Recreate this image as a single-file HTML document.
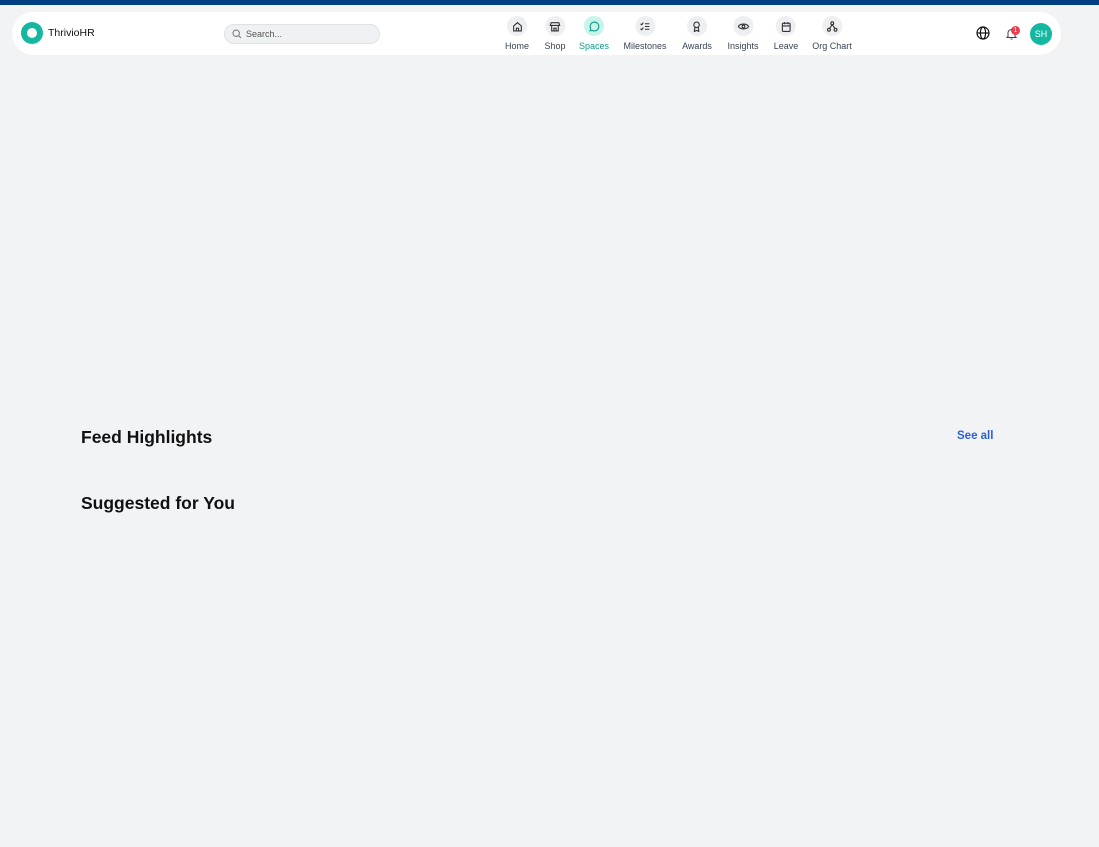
<!DOCTYPE html>
<html><head><meta charset="utf-8"><style>
*{margin:0;padding:0;box-sizing:border-box}
body{width:1099px;height:847px;background:#f2f3f5;font-family:"Liberation Sans",sans-serif;position:relative;overflow:hidden}
.top{position:absolute;left:0;top:0;width:1099px;height:5px;background:#003f7f}
.hdr{position:absolute;left:12px;top:12px;width:1049px;height:43px;background:#fff;border-radius:22px}
.logo{position:absolute;left:21px;top:22px;width:22px;height:22px;border-radius:50%;background:#14b8a0}
.logo:after{content:"";position:absolute;left:6px;top:6px;width:10px;height:10px;border-radius:50%;background:#fff}
.brand{position:absolute;left:48px;top:27px;font-size:10.5px;color:#111}
.search{position:absolute;left:224px;top:24px;width:156px;height:20px;border-radius:10px;background:#f0f1f3;border:1px solid #dfe1e5}
.search span{position:absolute;left:21px;top:4px;font-size:9px;color:#555}
.nav{position:absolute;top:16px;text-align:center;transform:translateX(-50%)}
.nav .c{width:20px;height:20px;border-radius:50%;background:#eeeff2;margin:0 auto;display:flex;align-items:center;justify-content:center}
.nav .l{font-size:9px;color:#3b4252;margin-top:5px;white-space:nowrap}
.nav.a .c{background:#c8f5ea}.nav.a .l{color:#0f9e8a}
h2{position:absolute;left:81px;font-size:17.5px;font-weight:bold;color:#111}
.see{position:absolute;left:957px;top:430px;font-size:11.5px;font-weight:bold;color:#2b5fd9}
.av{position:absolute;left:1030px;top:23px;width:22px;height:22px;border-radius:50%;background:#14b8a0;color:#fff;font-size:9px;text-align:center;line-height:22px}
</style></head><body>
<div class="top"></div>
<div class="hdr"></div>
<div class="logo"></div><div class="brand">ThrivioHR</div>
<div class="search"><svg style="position:absolute;left:7px;top:4px" width="10" height="10" viewBox="0 0 10 10" fill="none" stroke="#777" stroke-width="1"><circle cx="4.2" cy="4.2" r="3.2"/><path d="M6.6 6.6L9 9"/></svg><span>Search...</span></div>

<div class="nav" style="left:517px"><div class="c"><svg width="11" height="11" viewBox="0 0 10 10" fill="none" stroke="#333" stroke-width="1"><path d="M1.5 4.5L5 1.5 8.5 4.5V9h-7z M4 9V6.5h2V9"/></svg></div><div class="l">Home</div></div>
<div class="nav" style="left:555px"><div class="c"><svg width="11" height="11" viewBox="0 0 10 10" fill="none" stroke="#333" stroke-width="1"><path d="M1.5 1.5h7l.8 2.5h-8.6z M2 4v5h6V4 M4 9V6.5h2V9"/></svg></div><div class="l">Shop</div></div>
<div class="nav a" style="left:594px"><div class="c"><svg width="11" height="11" viewBox="0 0 10 10" fill="none" stroke="#0f9e8a" stroke-width="1"><path d="M5 1a4 4 0 1 1-2 7.5L1 9l.6-2A4 4 0 0 1 5 1z"/></svg></div><div class="l">Spaces</div></div>
<div class="nav" style="left:645px"><div class="c"><svg width="11" height="11" viewBox="0 0 10 10" fill="none" stroke="#333" stroke-width="1"><path d="M1 2.5l1 1 1.5-2M1 7l1 1 1.5-2M5 2.5h4M5 5h4M5 7.5h4"/></svg></div><div class="l">Milestones</div></div>
<div class="nav" style="left:697px"><div class="c"><svg width="11" height="11" viewBox="0 0 10 10" fill="none" stroke="#333" stroke-width="1"><circle cx="5" cy="3.5" r="2.5"/><path d="M3.5 5.5L3 9.5 5 8.5 7 9.5 6.5 5.5"/></svg></div><div class="l">Awards</div></div>
<div class="nav" style="left:743px"><div class="c"><svg width="12" height="11" viewBox="0 0 11 10" fill="none" stroke="#333" stroke-width="1"><path d="M.8 5C2.5 2 8.5 2 10.2 5 8.5 8 2.5 8 .8 5z"/><circle cx="5.5" cy="5" r="1.3"/></svg></div><div class="l">Insights</div></div>
<div class="nav" style="left:786px"><div class="c"><svg width="11" height="11" viewBox="0 0 10 10" fill="none" stroke="#333" stroke-width="1"><rect x="1.5" y="2" width="7" height="7.5" rx="1"/><path d="M3.5 1v2M6.5 1v2M1.5 4.5h7"/></svg></div><div class="l">Leave</div></div>
<div class="nav" style="left:832px"><div class="c"><svg width="12" height="11" viewBox="0 0 11 10" fill="none" stroke="#333" stroke-width="1"><circle cx="5.5" cy="2" r="1.3"/><circle cx="2.5" cy="8" r="1.3"/><circle cx="8.5" cy="8" r="1.3"/><path d="M5.5 3.3L3 6.8M5.5 3.3L8 6.8"/></svg></div><div class="l">Org Chart</div></div>

<svg style="position:absolute;left:976px;top:26px" width="14" height="14" viewBox="0 0 14 14" fill="none" stroke="#111" stroke-width="1.2"><circle cx="7" cy="7" r="6"/><ellipse cx="7" cy="7" rx="2.6" ry="6"/><path d="M1 7h12"/></svg>
<svg style="position:absolute;left:1006px;top:28px" width="11" height="12" viewBox="0 0 11 12" fill="none" stroke="#444" stroke-width="1"><path d="M2 8.5V5a3.5 3.5 0 0 1 7 0v3.5L10 9.5H1z M4.5 11h2"/></svg>
<div style="position:absolute;left:1011px;top:26px;width:9px;height:9px;border-radius:50%;background:#ef3b4a;color:#fff;font-size:7px;line-height:9px;text-align:center">1</div>
<div class="av">SH</div>

<h2 style="top:427px">Feed Highlights</h2>
<div class="see">See all</div>
<h2 style="top:493px">Suggested for You</h2>
</body></html>
